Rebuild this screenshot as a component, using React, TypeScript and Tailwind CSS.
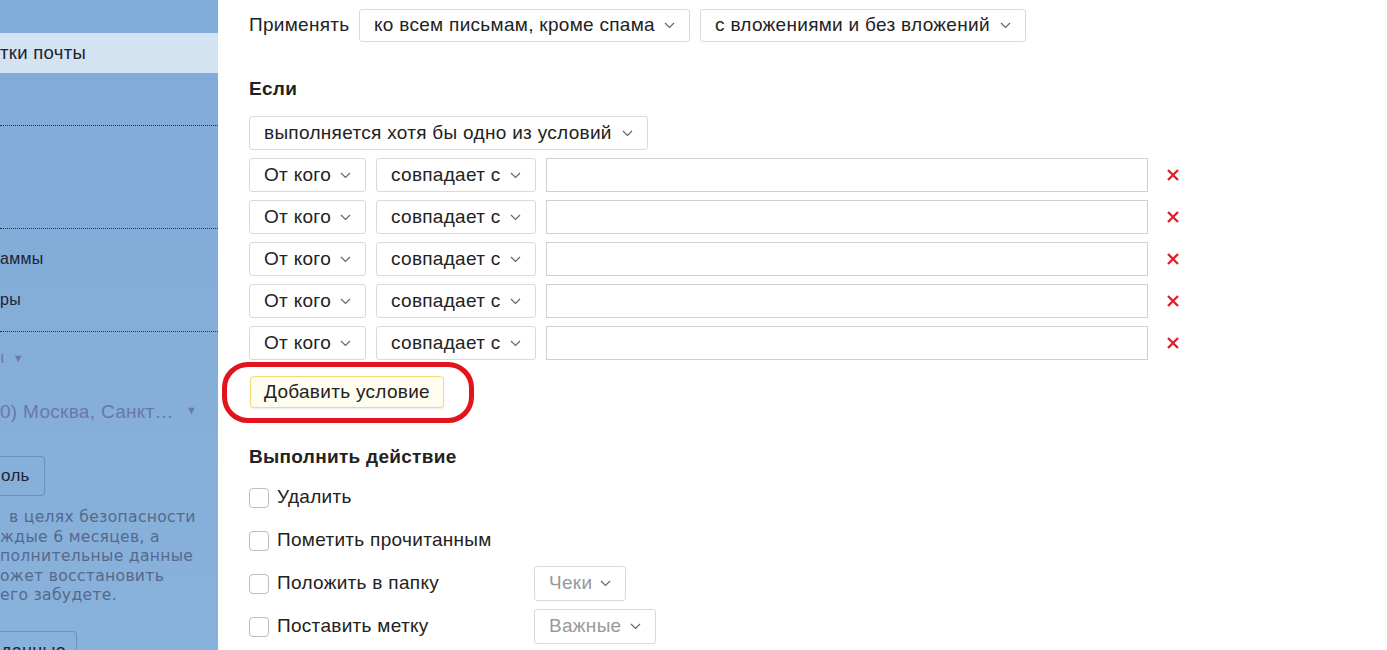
import React from "react";

const Chevron = ({ className = "" }: { className?: string }) => (
  <svg width="11" height="7" viewBox="0 0 11 7" className={className}>
    <path d="M1 1 L5.5 5.5 L10 1" fill="none" stroke="#666" strokeWidth="1.2" />
  </svg>
);

const Select = ({
  label,
  w,
  h = "h-[34px]",
  muted = false,
}: {
  label: string;
  w: string;
  h?: string;
  muted?: boolean;
}) => (
  <div
    className={`${w} ${h} shrink-0 flex items-center justify-between pl-[14px] pr-[14px] border border-[#d9d9d9] rounded-[3px] bg-white`}
  >
    <span className={`whitespace-nowrap ${muted ? "text-[#999]" : "text-[#222]"}`}>{label}</span>
    <Chevron />
  </div>
);

const Cross = () => (
  <svg width="14" height="14" viewBox="0 0 14 14">
    <path d="M2 2 L12 12 M12 2 L2 12" stroke="#e0202e" strokeWidth="2.4" />
  </svg>
);

const Checkbox = ({ label, children }: { label: string; children?: React.ReactNode }) => (
  <div className="flex items-center h-[43px]">
    <div className="w-[20px] h-[20px] border border-[#bdbdbd] rounded-[4px] bg-white" />
    <span className="ml-[8px] w-[257px] whitespace-nowrap">{label}</span>
    {children}
  </div>
);

const Dotted = () => <div className="border-t border-dotted border-[#233046] w-full" />;

function Sidebar() {
  return (
    <div className="w-[218px] shrink-0 h-[650px] overflow-hidden bg-gradient-to-b from-[#80acdb] via-[#84add8] to-[#88b2db] text-[16px] text-[#1d2330]">
      <div className="h-[33px]" />
      <div className="h-[40px] bg-[#d4e3f2] flex items-center text-[18.5px]">тки почты</div>
      <div className="h-[52px]" />
      <Dotted />
      <div className="h-[102px]" />
      <Dotted />
      <div className="h-[20px]" />
      <div className="h-[20px] flex items-center">аммы</div>
      <div className="h-[21px]" />
      <div className="h-[20px] flex items-center">ры</div>
      <div className="h-[21px]" />
      <Dotted />
      <div className="h-[16px]" />
      <div className="h-[20px] flex items-center text-[#6b78a6]">
        <span>ı</span>
        <span className="ml-[8px] text-[11px]">▼</span>
      </div>
      <div className="h-[34px]" />
      <div className="h-[20px] flex items-center text-[#6b78a6] text-[19px] whitespace-nowrap">
        <span>0) Москва, Санкт…</span>
        <span className="ml-[12px] text-[11px] -mt-[4px]">▼</span>
      </div>
      <div className="h-[34px]" />
      <div className="h-[40px] w-[45px] border border-[#6f90b8] border-l-0 rounded-r-[4px] flex items-center pl-[1px] text-[#1d2330] text-[17px]">
        оль
      </div>
      <div className="h-[12px]" />
      <div className="text-[15.6px] leading-[19.6px] text-[#56698a] font-['DejaVu_Sans',sans-serif] whitespace-nowrap">
        <div className="pl-[9px]">в целях безопасности</div>
        <div>ждые 6 месяцев, а</div>
        <div>полнительные данные</div>
        <div>ожет восстановить</div>
        <div>его забудете.</div>
      </div>
      <div className="h-[25px]" />
      <div className="h-[40px] w-[77px] border border-[#6f90b8] border-l-0 rounded-r-[4px] flex items-start pt-[6px] pl-[1px] text-[#1d2330] text-[18px]">
        данные
      </div>
    </div>
  );
}

export default function App() {
  const rows = [0, 1, 2, 3, 4];
  return (
    <div className="w-[1387px] h-[650px] overflow-hidden flex bg-white font-['Liberation_Sans',Arial,sans-serif] text-[19px] tracking-[0.3px] text-[#222]">
      <Sidebar />
      <div className="flex-1 pl-[31px] pt-[9px] relative">
        <div className="flex items-center gap-[10px]">
          <span className="w-[100px]">Применять</span>
          <Select label="ко всем письмам, кроме спама" w="w-[331px]" h="h-[33px]" />
          <Select label="с вложениями и без вложений" w="w-[326px]" h="h-[33px]" />
        </div>
        <div className="mt-[34px] font-bold h-[26px] flex items-center">Если</div>
        <div className="mt-[14px]">
          <Select label="выполняется хотя бы одно из условий" w="w-[399px]" />
        </div>
        <div className="mt-[8px] flex flex-col gap-[8px]">
          {rows.map((r) => (
            <div key={r} className="flex items-center">
              <Select label="От кого" w="w-[117px]" />
              <div className="ml-[10px]">
                <Select label="совпадает с" w="w-[160px]" />
              </div>
              <div className="ml-[10px] w-[602px] h-[34px] border border-[#d0d0d0] bg-white" />
              <div className="ml-[18px]">
                <Cross />
              </div>
            </div>
          ))}
        </div>
        <div className="mt-[16px] ml-[1px] w-[194px] h-[32px] border border-[#f0dc7a] rounded-[4px] bg-[#fffdf0] flex items-center justify-center shadow-[0_1px_2px_rgba(0,0,0,0.08)]">
          Добавить условие
        </div>
        <div className="absolute left-[4px] top-[362px] w-[252px] h-[61px] border-[5px] border-[#e3131c] rounded-[26px] pointer-events-none" />
        <div className="mt-[36px] font-bold h-[26px] flex items-center">Выполнить действие</div>
        <div className="mt-[6px]">
          <Checkbox label="Удалить" />
          <Checkbox label="Пометить прочитанным" />
          <Checkbox label="Положить в папку">
            <Select label="Чеки" w="w-[92px]" h="h-[35px]" muted />
          </Checkbox>
          <Checkbox label="Поставить метку">
            <Select label="Важные" w="w-[122px]" h="h-[35px]" muted />
          </Checkbox>
        </div>
      </div>
    </div>
  );
}
